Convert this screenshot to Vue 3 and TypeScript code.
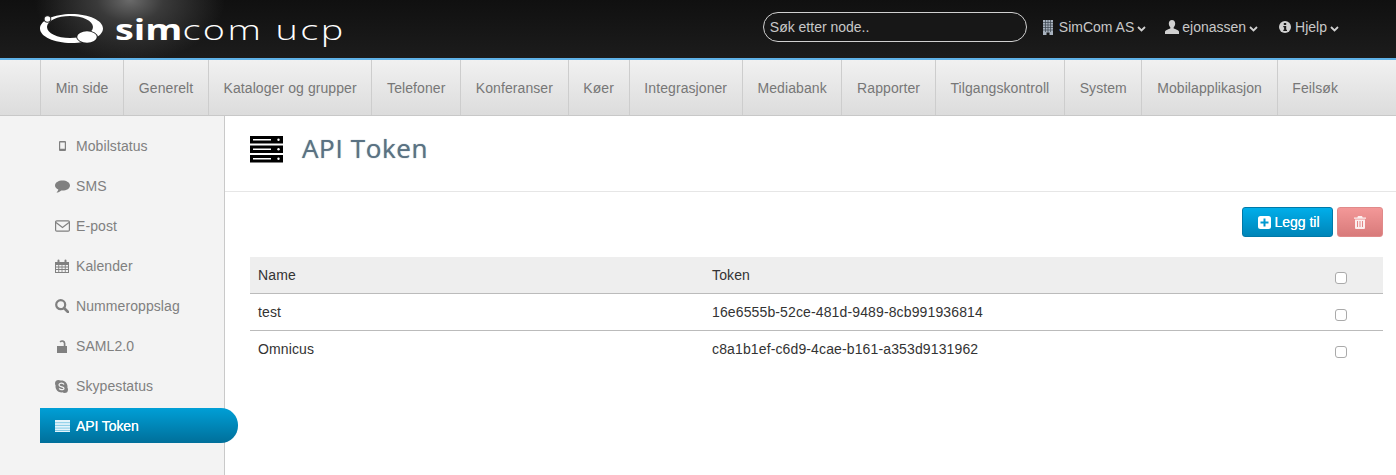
<script setup lang="ts">
const navItems: string[] = ['Min side','Generelt','Kataloger og grupper','Telefoner','Konferanser','Køer','Integrasjoner','Mediabank','Rapporter','Tilgangskontroll','System','Mobilapplikasjon','Feilsøk']
const sideItems: { key: string; label: string; active?: boolean }[] = [
  { key: 'mobile', label: 'Mobilstatus' },
  { key: 'sms', label: 'SMS' },
  { key: 'mail', label: 'E-post' },
  { key: 'cal', label: 'Kalender' },
  { key: 'search', label: 'Nummeroppslag' },
  { key: 'lock', label: 'SAML2.0' },
  { key: 'skype', label: 'Skypestatus' },
  { key: 'list', label: 'API Token', active: true },
]
const rows: { name: string; token: string }[] = [
  { name: 'test', token: '16e6555b-52ce-481d-9489-8cb991936814' },
  { name: 'Omnicus', token: 'c8a1b1ef-c6d9-4cae-b161-a353d9131962' },
]
</script>

<template>
  <div class="page">
    <header class="top">
      <div class="brand">
        <svg class="logo" width="64" height="32" viewBox="0 0 64 32">
          <path fill-rule="evenodd" d="M31.500 1C49 1 63 7.500 63 15.500S49 30 31.500 30 0 23.500 0 15.500 14 1 31.500 1zM30 3C17.300 3 7 7.900 7 14s10.300 11 23 11 23-4.900 23-11S42.700 3 30 3z" fill="#fff"/>
          <circle cx="7.500" cy="6" r="3.800" fill="#2a2a2a"/>
          <circle cx="7.500" cy="6" r="2.800" fill="#fff"/>
          <ellipse cx="47" cy="24" rx="10.800" ry="6.500" fill="#1e1e1e"/>
          <ellipse cx="47" cy="24" rx="9.800" ry="5.700" fill="#fff"/>
        </svg>
        <span class="wordmark"><b>sim</b>com ucp</span>
      </div>
      <div class="top-right">
        <input class="search" type="text" placeholder="Søk etter node.." />
        <span class="menu menu-co">
          <svg class="ico-co" width="10" height="15" viewBox="0 0 10 15"><path d="M0 0h10v15H6.500v-2.500h-3V15H0z" fill="#a8b2be"/><path d="M0 2.500h10M0 5h10M0 7.500h10M0 10h10M2.500 0v12M5 0v12M7.500 0v12" stroke="#3a444e" stroke-width=".7"/></svg>
          SimCom AS<svg class="caret" width="9" height="6" viewBox="0 0 9 6"><path d="M1 1l3.500 3.500L8 1" fill="none" stroke="#d0d0d0" stroke-width="1.800"/></svg>
        </span>
        <span class="menu menu-user">
          <svg width="14" height="14" viewBox="0 0 14 14"><path d="M7 0c2 0 3.200 1.500 3.200 3.600 0 1.500-.7 3-1.500 3.700v1.200c1.700.7 4.800 1.500 5.300 3V14H0v-2.500c.5-1.500 3.600-2.300 5.300-3V7.300C4.500 6.600 3.800 5.100 3.800 3.600 3.800 1.500 5 0 7 0z" fill="#d0d0d0"/></svg>
          ejonassen<svg class="caret" width="9" height="6" viewBox="0 0 9 6"><path d="M1 1l3.500 3.500L8 1" fill="none" stroke="#d0d0d0" stroke-width="1.800"/></svg>
        </span>
        <span class="menu menu-help">
          <svg width="12" height="12" viewBox="0 0 12 12"><circle cx="6" cy="6" r="6" fill="#d0d0d0"/><path d="M4.800 2h2.400v2H4.800zM4.300 5h2.900v3.800h.8V10H4.300V8.800h.8V6.200h-.8z" fill="#1a1a1a"/></svg>
          Hjelp<svg class="caret" width="9" height="6" viewBox="0 0 9 6"><path d="M1 1l3.500 3.500L8 1" fill="none" stroke="#d0d0d0" stroke-width="1.800"/></svg>
        </span>
      </div>
    </header>

    <nav class="nav">
      <a v-for="item in navItems" :key="item" class="nav-item">{{ item }}</a>
    </nav>

    <div class="body">
      <aside class="side">
        <a v-for="s in sideItems" :key="s.key" class="side-item" :class="{ active: s.active }">
          <span class="side-icon">
            <svg v-if="s.key === 'mobile'" width="7" height="10" viewBox="0 0 7 10"><path fill-rule="evenodd" d="M1 0h5a1 1 0 0 1 1 1v8a1 1 0 0 1-1 1H1a1 1 0 0 1-1-1V1a1 1 0 0 1 1-1zm.2 1.500v6.300h4.600V1.500z" fill="#808080"/></svg>
            <svg v-else-if="s.key === 'sms'" width="15" height="13" viewBox="0 0 15 13"><path d="M7.500 0.500c4 0 7.500 2 7.500 5s-3.500 5-7.500 5l-1.200-.1C5 11.500 3.200 12.500 1.500 12.500c1-1 1.700-2 1.800-3C1.300 8.500 0 7.100 0 5.500c0-3 3.500-5 7.500-5z" fill="#808080"/></svg>
            <svg v-else-if="s.key === 'mail'" width="15" height="12" viewBox="0 0 15 12"><rect x=".6" y=".8" width="13.800" height="10.400" rx="1.200" fill="none" stroke="#808080" stroke-width="1.200"/><path d="M1 2.500l6.500 5 6.500-5" fill="none" stroke="#808080" stroke-width="1.200"/></svg>
            <svg v-else-if="s.key === 'cal'" width="14" height="14" viewBox="0 0 14 14"><path fill-rule="evenodd" d="M0 3h2.500V1.500a1 1 0 0 1 2 0V3h5V1.500a1 1 0 0 1 2 0V3H14v11H0zM1 6v1.600h2.300V6zm3.200 0v1.600h2.400V6zm3.200 0v1.600h2.400V6zm3.300 0v1.600H13V6zM1 8.500v1.600h2.300V8.500zm3.200 0v1.600h2.400V8.500zm3.200 0v1.600h2.400V8.500zm3.300 0v1.600H13V8.500zM1 11v2h2.300v-2zm3.200 0v2h2.400v-2zm3.200 0v2h2.400v-2zm3.300 0v2H13v-2z" fill="#808080"/></svg>
            <svg v-else-if="s.key === 'search'" width="14" height="14" viewBox="0 0 14 14"><circle cx="5.700" cy="5.700" r="4.500" fill="none" stroke="#808080" stroke-width="2.200"/><path d="M9 9l4 4" stroke="#808080" stroke-width="2.600" stroke-linecap="round"/></svg>
            <svg v-else-if="s.key === 'lock'" class="ico-lock" width="10" height="13" viewBox="0 0 10 13"><rect y="6" width="10" height="7" fill="#808080"/><path d="M3.200 2.100A2.400 2.400 0 0 1 7.600 3.300V6" fill="none" stroke="#808080" stroke-width="1.700"/></svg>
            <svg v-else-if="s.key === 'skype'" width="13" height="13" viewBox="0 0 13 13"><path fill-rule="evenodd" d="M3.500 0c.8 0 1.500.2 2.100.6C6 .5 6.200.5 6.500.5c3.300 0 6 2.700 6 6 0 .3 0 .6-.1.900.4.600.6 1.300.6 2.100A3.500 3.500 0 0 1 9.500 13c-.8 0-1.500-.3-2.100-.7l-.9.100c-3.300 0-6-2.600-6-5.900 0-.3 0-.6.100-.9C.2 5 0 4.300 0 3.500A3.500 3.500 0 0 1 3.500 0z" fill="#808080"/><path d="M9 4.600C8.500 3.600 7.500 3.200 6.500 3.200c-1.300 0-2.500.6-2.500 1.800 0 2.300 5 1.300 5 3.200 0 .9-1 1.500-2.400 1.500-1 0-1.900-.5-2.400-1.300" fill="none" stroke="#f3f3f3" stroke-width="1.200"/></svg>
            <svg v-else width="15" height="12" viewBox="0 0 15 12"><path d="M0 0h15v12H0z" fill="#e4f4fb"/><path d="M0 2.700h15M0 5.400h15M0 8.100h15M0 10.500h15" stroke="#6cc0e0" stroke-width=".8"/></svg>
          </span>
          <span class="side-label">{{ s.label }}</span>
        </a>
      </aside>

      <main class="main">
        <div class="title-bar">
          <svg width="33" height="27" viewBox="0 0 33 27">
            <rect x="0" y="0" width="33" height="7.500" fill="#000"/><rect x="0" y="9.500" width="33" height="7.500" fill="#000"/><rect x="0" y="19" width="33" height="7.500" fill="#000"/>
            <path d="M3 3.700h18M3 13.200h18M3 22.700h18" stroke="#fff" stroke-width="1.400"/>
            <circle cx="28.500" cy="3.700" r="1.200" fill="#fff"/><circle cx="28.500" cy="13.200" r="1.200" fill="#fff"/><circle cx="28.500" cy="22.700" r="1.200" fill="#fff"/>
          </svg>
          <h1>API Token</h1>
        </div>
        <div class="content">
          <div class="toolbar">
            <button class="btn btn-add" type="button">
              <svg width="13" height="13" viewBox="0 0 13 13"><path fill-rule="evenodd" d="M2.500 0h8A2.500 2.500 0 0 1 13 2.500v8a2.500 2.500 0 0 1-2.500 2.500h-8A2.500 2.500 0 0 1 0 10.500v-8A2.500 2.500 0 0 1 2.500 0zM5.500 2.500v3h-3v2h3v3h2v-3h3v-2h-3v-3z" fill="#fff"/></svg>
              Legg til
            </button>
            <button class="btn btn-del" type="button" aria-label="Slett">
              <svg width="12" height="13" viewBox="0 0 12 13"><path fill-rule="evenodd" d="M4 0h4l.7 1.500H12v1.300H0V1.500h3.300zM1 3.500h10V12a1 1 0 0 1-1 1H2a1 1 0 0 1-1-1zM3 5v6h1V5zm2.500 0v6h1V5zM8 5v6h1V5z" fill="#fff" fill-opacity=".85"/></svg>
            </button>
          </div>
          <table class="tbl">
            <thead>
              <tr><th class="c-name">Name</th><th class="c-token">Token</th><th class="c-check"><input type="checkbox" /></th></tr>
            </thead>
            <tbody>
              <tr v-for="r in rows" :key="r.name">
                <td>{{ r.name }}</td><td>{{ r.token }}</td><td class="c-check"><input type="checkbox" /></td>
              </tr>
            </tbody>
          </table>
        </div>
      </main>
    </div>
  </div>
</template>

<style scoped>
.page { width: 1396px; height: 475px; overflow: hidden; font-family: "Liberation Sans", Arial, sans-serif; font-size: 14px; color: #333; display: flex; flex-direction: column; background: #fff; }
.top { height: 58px; flex: none; display: flex; justify-content: space-between; align-items: center; background: radial-gradient(ellipse 95px 62px at 130px 0, #6a6a6a 0%, #3a3a3a 35%, rgba(40,40,40,0) 100%), linear-gradient(#101010, #1c1c1c); }
.brand { display: flex; align-items: center; margin-left: 40px; gap: 11px; }
.logo { display: block; }
.wordmark { font-family: "Open Sans", sans-serif; font-weight: 300; font-size: 28px; line-height: 32px; color: #fff; letter-spacing: 1.800px; white-space: nowrap; display: inline-block; transform: scaleX(1.35); transform-origin: left center; }
.wordmark b { font-weight: 700; letter-spacing: 0; }
.top-right { display: flex; align-items: center; margin-right: 57px; margin-top: -4px; }
.search { box-sizing: border-box; width: 264px; height: 30px; border: 1px solid #d0d0d0; border-radius: 15px; background: #171717; padding: 0 6px; font: 14px "Liberation Sans", Arial, sans-serif; color: #ddd; outline: none; margin-right: 16px; }
.search::placeholder { color: #c8c8c8; opacity: 1; }
.menu { display: inline-flex; align-items: center; color: #c8c8c8; font-size: 14px; white-space: nowrap; }
.menu svg:first-child { margin-right: 3px; }
.menu svg.ico-co { margin-right: 6px; }
.menu-user { margin-left: 19px; }
.menu-help { margin-left: 21px; }
.menu-help svg:first-child { margin-right: 4px; }
.caret { margin-left: 3px; margin-top: 3px; }
.nav { height: 58px; flex: none; box-sizing: border-box; padding-left: 40px; display: flex; background: linear-gradient(#f1f1f1, #dcdcdc); border-top: 2px solid #5fb2e8; border-bottom: 1px solid #c8c8c8; }
.nav-item { box-sizing: border-box; height: 100%; padding: 0 14.700px; display: flex; align-items: center; border-left: 1px solid #cdcdcd; color: #777; font-size: 14px; white-space: nowrap; letter-spacing: .08px; }
.body { flex: 1; display: flex; min-height: 0; }
.side { width: 225px; flex: none; box-sizing: border-box; background: #f3f3f3; border-right: 1px solid #c9c9c9; padding-top: 10px; position: relative; overflow: visible; z-index: 1; }
.side-item { box-sizing: border-box; display: flex; align-items: center; height: 40px; padding-left: 15px; margin-left: 40px; color: #808080; font-size: 14px; letter-spacing: .08px; }
.side-item.active { width: 198px; height: 35px; margin-top: 2px; color: #fff; letter-spacing: -.1px; text-shadow: 0 0 .6px #fff; background: linear-gradient(#009fd6, #006f9a); border-radius: 0 17px 17px 0; }
.side-icon { width: 21px; flex: none; display: flex; justify-content: flex-start; }
.side-item:first-child .side-icon { padding-left: 4px; box-sizing: border-box; }
.ico-lock { margin-left: 2px; }
.main { flex: 1; min-width: 0; }
.title-bar { box-sizing: border-box; height: 76px; padding: 20px 0 0 25px; border-bottom: 1px solid #e6e6e6; display: flex; align-items: flex-start; gap: 19px; }
.title-bar svg { display: block; }
.title-bar h1 { margin: -4px 0 0; font-family: "Open Sans", sans-serif; font-weight: 400; font-size: 26px; line-height: 32px; color: #5a7283; letter-spacing: .65px; text-shadow: 0 0 1px rgba(90,114,131,.8); }
.content { padding: 15px 13px 0 25px; }
.toolbar { display: flex; justify-content: flex-end; gap: 4px; height: 30px; margin-bottom: 20px; }
.btn { box-sizing: border-box; height: 30px; border-radius: 3px; display: inline-flex; align-items: center; justify-content: center; gap: 4px; color: #fff; font: 400 14px "Liberation Sans", Arial, sans-serif; text-shadow: 0 0 .6px #fff; padding: 0; }
.btn-add { width: 91px; gap: 3px; padding-left: 3px; background: linear-gradient(#00aeea, #0085b8); border: 1px solid #0079a8; }
.btn-del { width: 46px; background: linear-gradient(#f39898, #d87a7a); border: 1px solid #e08a8a; }
.tbl { width: 1133px; border-collapse: collapse; table-layout: fixed; font-size: 14px; color: #333; letter-spacing: .13px; }
.tbl th { background: #eee; font-weight: 400; text-align: left; height: 36px; padding: 0 8px; border-bottom: 1px solid #bbb; box-sizing: border-box; }
.tbl td { height: 37px; padding: 0 8px; box-sizing: border-box; }
.tbl tbody tr:first-child td { border-bottom: 1px solid #bbb; }
.c-name { width: 454px; }
.c-check { width: 48px; text-align: left; }
.tbl th.c-check, .tbl td.c-check { padding: 7px 0 0 0; }
.tbl input { appearance: none; box-sizing: border-box; width: 12px; height: 12px; margin: 0; display: block; background: #fff; border: 1px solid #aaa; border-radius: 3px; }
</style>

<style>
html, body { margin: 0; padding: 0; background: #fff; }
</style>
